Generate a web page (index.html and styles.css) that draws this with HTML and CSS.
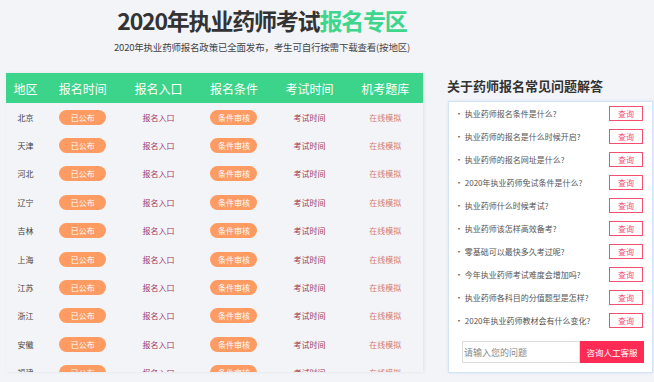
FILE: index.html
```html
<!DOCTYPE html>
<html lang="zh-CN">
<head>
    <meta charset="UTF-8">
    <title>2020年执业药师考试报名专区</title>
    <link rel="stylesheet" href="styles.css">
</head>
<body>
    <div class="page">
        <div class="banner">
            <h1 class="banner-title">2020年执业药师考试<span class="hl">报名专区</span></h1>
            <p class="banner-sub">2020年执业药师报名政策已全面发布，考生可自行按需下载查看(按地区)</p>
        </div>

        <div class="main">
            <!-- 地区表格 -->
            <div class="region-table">
                <div class="row head">
                    <div>地区</div>
                    <div>报名时间</div>
                    <div>报名入口</div>
                    <div>报名条件</div>
                    <div>考试时间</div>
                    <div>机考题库</div>
                </div>
                <div class="row"><div class="area">北京</div><div><span class="pill">已公布</span></div><div class="link-a">报名入口</div><div><span class="pill">条件审核</span></div><div class="link-b">考试时间</div><div class="link-c">在线模拟</div></div>
                <div class="row"><div class="area">天津</div><div><span class="pill">已公布</span></div><div class="link-a">报名入口</div><div><span class="pill">条件审核</span></div><div class="link-b">考试时间</div><div class="link-c">在线模拟</div></div>
                <div class="row"><div class="area">河北</div><div><span class="pill">已公布</span></div><div class="link-a">报名入口</div><div><span class="pill">条件审核</span></div><div class="link-b">考试时间</div><div class="link-c">在线模拟</div></div>
                <div class="row"><div class="area">辽宁</div><div><span class="pill">已公布</span></div><div class="link-a">报名入口</div><div><span class="pill">条件审核</span></div><div class="link-b">考试时间</div><div class="link-c">在线模拟</div></div>
                <div class="row"><div class="area">吉林</div><div><span class="pill">已公布</span></div><div class="link-a">报名入口</div><div><span class="pill">条件审核</span></div><div class="link-b">考试时间</div><div class="link-c">在线模拟</div></div>
                <div class="row"><div class="area">上海</div><div><span class="pill">已公布</span></div><div class="link-a">报名入口</div><div><span class="pill">条件审核</span></div><div class="link-b">考试时间</div><div class="link-c">在线模拟</div></div>
                <div class="row"><div class="area">江苏</div><div><span class="pill">已公布</span></div><div class="link-a">报名入口</div><div><span class="pill">条件审核</span></div><div class="link-b">考试时间</div><div class="link-c">在线模拟</div></div>
                <div class="row"><div class="area">浙江</div><div><span class="pill">已公布</span></div><div class="link-a">报名入口</div><div><span class="pill">条件审核</span></div><div class="link-b">考试时间</div><div class="link-c">在线模拟</div></div>
                <div class="row"><div class="area">安徽</div><div><span class="pill">已公布</span></div><div class="link-a">报名入口</div><div><span class="pill">条件审核</span></div><div class="link-b">考试时间</div><div class="link-c">在线模拟</div></div>
                <div class="row"><div class="area">福建</div><div><span class="pill">已公布</span></div><div class="link-a">报名入口</div><div><span class="pill">条件审核</span></div><div class="link-b">考试时间</div><div class="link-c">在线模拟</div></div>
            </div>

            <!-- 常见问题 -->
            <div class="faq">
                <h2 class="faq-title">关于药师报名常见问题解答</h2>
                <div class="faq-box">
                    <div class="faq-item"><span>· 执业药师报名条件是什么?</span><span class="query">查询</span></div>
                    <div class="faq-item"><span>· 执业药师的报名是什么时候开启?</span><span class="query">查询</span></div>
                    <div class="faq-item"><span>· 执业药师的报名网址是什么?</span><span class="query">查询</span></div>
                    <div class="faq-item"><span>· 2020年执业药师免试条件是什么?</span><span class="query">查询</span></div>
                    <div class="faq-item"><span>· 执业药师什么时候考试?</span><span class="query">查询</span></div>
                    <div class="faq-item"><span>· 执业药师该怎样高效备考?</span><span class="query">查询</span></div>
                    <div class="faq-item"><span>· 零基础可以最快多久考过呢?</span><span class="query">查询</span></div>
                    <div class="faq-item"><span>· 今年执业药师考试难度会增加吗?</span><span class="query">查询</span></div>
                    <div class="faq-item"><span>· 执业药师各科目的分值题型是怎样?</span><span class="query">查询</span></div>
                    <div class="faq-item"><span>· 2020年执业药师教材会有什么变化?</span><span class="query">查询</span></div>
                    <div class="ask">
                        <input type="text" class="ask-input" placeholder="请输入您的问题">
                        <button class="ask-btn">咨询人工客服</button>
                    </div>
                </div>
            </div>
        </div>
    </div>
</body>
</html>
```

FILE: styles.css
```css
* {
    margin: 0;
    padding: 0;
    box-sizing: border-box;
    font-family: 'Noto Sans CJK SC', 'Noto Sans', sans-serif;
}

body {
    background-color: #f3f4f8;
    color: #333;
    overflow: hidden;
}

.page {
    width: 654px;
    height: 382px;
}

.banner {
    width: 524px;
    text-align: center;
    padding-top: 6px;
}

.banner-title {
    font-size: 23px;
    line-height: 28px;
    font-weight: 700;
    color: #333;
    letter-spacing: -1.2px;
}

.banner-title .hl {
    color: #3dd68c;
}

.banner-sub {
    margin-top: 6px;
    font-size: 9.5px;
    line-height: 14px;
    color: #444;
    letter-spacing: -0.2px;
}

.main {
    display: flex;
    margin-top: 19px;
    padding-left: 6px;
    gap: 25px;
}

/* 表格 */
.region-table {
    width: 417px;
    height: 299px;
    overflow: hidden;
    box-shadow: 1px 0 3px rgba(0,0,0,0.08);
}

.row {
    display: grid;
    grid-template-columns: 39px repeat(5, 1fr);
    height: 28.4px;
    align-items: center;
    text-align: center;
    font-size: 8px;
}

.row.head {
    height: 30px;
    background-color: #3bd48a;
    color: #fff;
    font-size: 12px;
}

.area {
    color: #444;
}

.pill {
    display: inline-block;
    width: 47px;
    height: 15px;
    line-height: 15px;
    border-radius: 8px;
    background-color: #fd9b62;
    color: #fff;
}

.link-a {
    color: #a3345c;
}

.link-b {
    color: #a33a4e;
}

.link-c {
    color: #d47a70;
}

/* 问题解答 */
.faq {
    width: 205px;
    padding-top: 4px;
}

.faq-title {
    font-size: 13px;
    line-height: 18px;
    font-weight: 700;
    color: #333;
    margin-left: -1px;
}

.faq-box {
    margin-top: 6px;
    background-color: #fff;
    border: 1px solid #d3e4f6;
    box-shadow: 0 0 3px rgba(120,160,210,0.2);
    padding: 0 8px 9px 6px;
}

.faq-item {
    height: 23px;
    display: flex;
    align-items: center;
    justify-content: space-between;
    font-size: 8px;
    color: #555;
}

.query {
    width: 34px;
    height: 15px;
    line-height: 13px;
    border: 1px solid #f2506e;
    color: #f2506e;
    text-align: center;
    margin-right: 1px;
}

.ask {
    display: flex;
    margin-top: 9px;
    padding-left: 7px;
}

.ask-input {
    width: 118px;
    height: 22px;
    border: 1px solid #ddd;
    padding: 0 1px;
    font-size: 9px;
    color: #555;
    outline: none;
}

.ask-input::placeholder {
    color: #888;
}

.ask-btn {
    flex: 1;
    height: 22px;
    border: none;
    background-color: #fe2c55;
    color: #fff;
    font-size: 8.5px;
}
```
